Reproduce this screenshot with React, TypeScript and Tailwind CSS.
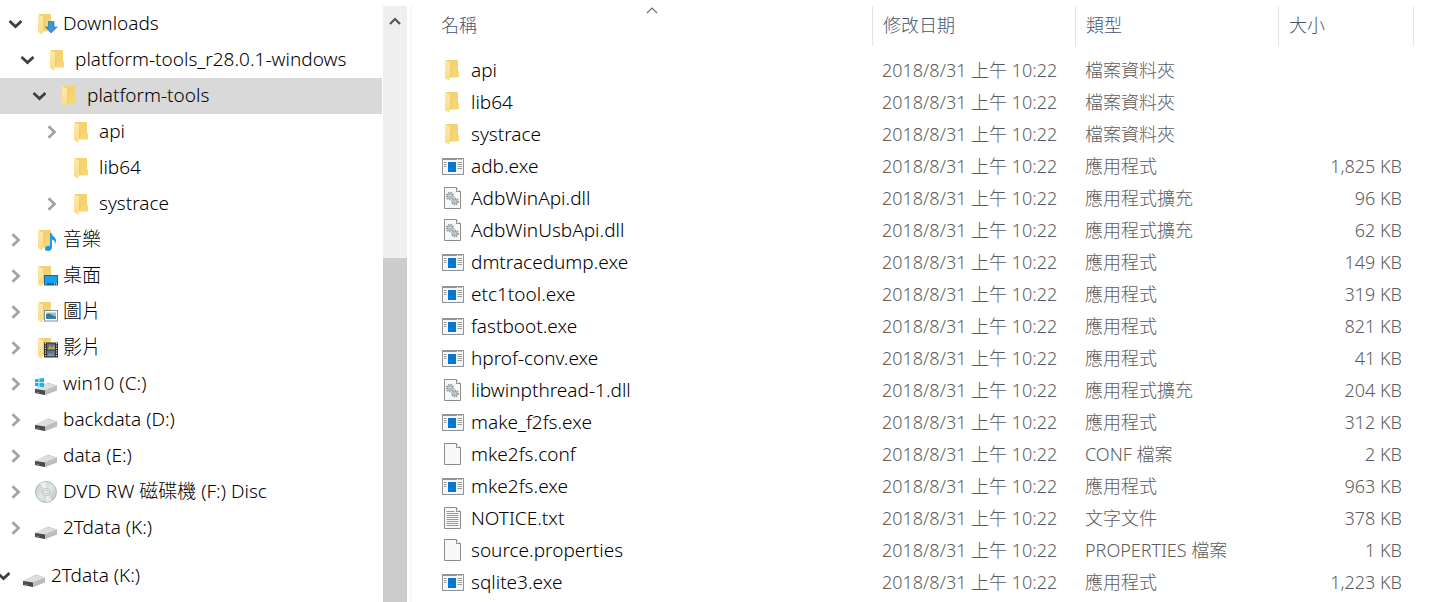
import { useState, type ReactNode } from 'react'
import clsx from 'clsx'

type IconName =
  | 'folder'
  | 'downloads'
  | 'music'
  | 'desktop'
  | 'pictures'
  | 'videos'
  | 'system'
  | 'drive'
  | 'disc'
  | 'exe'
  | 'dll'
  | 'file'
  | 'text'

interface TreeNode {
  id: string
  label: string
  icon: IconName
  level: number
  state?: 'open' | 'closed'
}

interface FileRow {
  name: string
  icon: IconName
  type: string
  size: string
}

const MODIFIED = '2018/8/31 上午 10:22'

const tree: TreeNode[] = [
  { id: 'downloads', label: 'Downloads', icon: 'downloads', level: 1, state: 'open' },
  { id: 'r28', label: 'platform-tools_r28.0.1-windows', icon: 'folder', level: 2, state: 'open' },
  { id: 'tools', label: 'platform-tools', icon: 'folder', level: 3, state: 'open' },
  { id: 'api', label: 'api', icon: 'folder', level: 4, state: 'closed' },
  { id: 'lib64', label: 'lib64', icon: 'folder', level: 4 },
  { id: 'systrace', label: 'systrace', icon: 'folder', level: 4, state: 'closed' },
  { id: 'music', label: '音樂', icon: 'music', level: 1, state: 'closed' },
  { id: 'desktop', label: '桌面', icon: 'desktop', level: 1, state: 'closed' },
  { id: 'pictures', label: '圖片', icon: 'pictures', level: 1, state: 'closed' },
  { id: 'videos', label: '影片', icon: 'videos', level: 1, state: 'closed' },
  { id: 'c', label: 'win10 (C:)', icon: 'system', level: 1, state: 'closed' },
  { id: 'd', label: 'backdata (D:)', icon: 'drive', level: 1, state: 'closed' },
  { id: 'e', label: 'data (E:)', icon: 'drive', level: 1, state: 'closed' },
  { id: 'f', label: 'DVD RW 磁碟機 (F:) Disc', icon: 'disc', level: 1, state: 'closed' },
  { id: 'k', label: '2Tdata (K:)', icon: 'drive', level: 1, state: 'closed' },
  { id: 'k-root', label: '2Tdata (K:)', icon: 'drive', level: 0, state: 'open' },
]

const files: FileRow[] = [
  { name: 'api', icon: 'folder', type: '檔案資料夾', size: '' },
  { name: 'lib64', icon: 'folder', type: '檔案資料夾', size: '' },
  { name: 'systrace', icon: 'folder', type: '檔案資料夾', size: '' },
  { name: 'adb.exe', icon: 'exe', type: '應用程式', size: '1,825 KB' },
  { name: 'AdbWinApi.dll', icon: 'dll', type: '應用程式擴充', size: '96 KB' },
  { name: 'AdbWinUsbApi.dll', icon: 'dll', type: '應用程式擴充', size: '62 KB' },
  { name: 'dmtracedump.exe', icon: 'exe', type: '應用程式', size: '149 KB' },
  { name: 'etc1tool.exe', icon: 'exe', type: '應用程式', size: '319 KB' },
  { name: 'fastboot.exe', icon: 'exe', type: '應用程式', size: '821 KB' },
  { name: 'hprof-conv.exe', icon: 'exe', type: '應用程式', size: '41 KB' },
  { name: 'libwinpthread-1.dll', icon: 'dll', type: '應用程式擴充', size: '204 KB' },
  { name: 'make_f2fs.exe', icon: 'exe', type: '應用程式', size: '312 KB' },
  { name: 'mke2fs.conf', icon: 'file', type: 'CONF 檔案', size: '2 KB' },
  { name: 'mke2fs.exe', icon: 'exe', type: '應用程式', size: '963 KB' },
  { name: 'NOTICE.txt', icon: 'text', type: '文字文件', size: '378 KB' },
  { name: 'source.properties', icon: 'file', type: 'PROPERTIES 檔案', size: '1 KB' },
  { name: 'sqlite3.exe', icon: 'exe', type: '應用程式', size: '1,223 KB' },
]

const indent = ['-ml-1', 'pl-2', 'pl-5', 'pl-8', 'pl-11']

const FolderShape = () => (
  <>
    <path d="M4 1h12v10.5l1 1V18.500H7z" fill="url(#folder-back)" />
    <path d="M3 1l5 2.500q.500.300.500 1V18l-1 .500V21.800L3 19.300z" fill="url(#folder-front)" />
    <path d="M8.500 4.500V18" stroke="#e9c565" strokeWidth=".600" />
  </>
)

const PageShape = () => (
  <>
    <path d="M2.500 .500h12l4 4v17h-16z" fill="#f8f8f8" stroke="#8c8c8c" />
    <path d="M14.500 .500v4h4" fill="#fff" stroke="#8c8c8c" />
  </>
)

const DriveShape = () => (
  <>
    <path d="M0 16l13-6.500 9 3v5L10 22 0 20z" fill="#b9b9b9" />
    <path d="M0 16l12.500-6 9.500 2.500L10 17.500z" fill="#dedede" />
    <path d="M0 16l10 1.500V22L0 20z" fill="#4a4a4a" />
    <path d="M10 17.500l12-5v4.500L10 22z" fill="#bdbdbd" />
    <path d="M1.500 19.200l3 .500" stroke="#8e8e8e" strokeWidth=".800" />
  </>
)

const Gear = ({ cx, cy, r }: { cx: number; cy: number; r: number }) => (
  <>
    <circle cx={cx} cy={cy} r={r} fill="none" stroke="#8797a3" strokeWidth="1.600" strokeDasharray="1.400 .900" />
    <circle cx={cx} cy={cy} r={r - 1} fill="#d5dce0" stroke="#8797a3" strokeWidth=".800" />
    <circle cx={cx} cy={cy} r=".900" fill="#fff" stroke="#74858f" strokeWidth=".500" />
  </>
)

const shapes: Record<IconName, ReactNode> = {
  folder: <FolderShape />,
  downloads: (
    <>
      <FolderShape />
      <path d="M13.500 8.500h5.500v5.500h3.200l-6 6-6-6h3.300z" fill="#3a97dc" stroke="#2176bb" strokeWidth=".700" />
    </>
  ),
  music: (
    <>
      <FolderShape />
      <path d="M15 4h1.500c.500 3.500 4.500 4 4.500 7.500 0 1.500-.500 2.500-1 3.500.200-3-1.500-4-3-4.500v8c0 2-1.800 3.500-4 3.500s-3.500-1-3-3c.400-1.600 2.500-2.700 5-2z" fill="#159bea" />
    </>
  ),
  desktop: (
    <>
      <FolderShape />
      <rect x="9.500" y="10.500" width="13" height="9.500" fill="#18a0f2" stroke="#1b659b" />
      <path d="M10 19h12.500" stroke="#0b4f82" strokeWidth="1.200" />
      <path d="M10.500 19h1M19 19h1M21 19h1" stroke="#fff" strokeWidth="1" />
    </>
  ),
  pictures: (
    <>
      <FolderShape />
      <rect x="9.500" y="9.500" width="13" height="10.500" fill="#fff" stroke="#8c8c8c" />
      <rect x="11" y="11.500" width="10" height="6.500" fill="#8cc3ee" />
      <path d="M11 13.500l3-1 7 3.500v2H11z" fill="#43766f" />
      <path d="M11 16.500l10-1v2.500H11z" fill="#3c7fb5" />
    </>
  ),
  videos: (
    <>
      <FolderShape />
      <rect x="9" y="5.500" width="14" height="15" fill="#2d2d2d" />
      <rect x="12" y="6.500" width="8" height="6" fill="#4a6aa0" />
      <rect x="12" y="13.500" width="8" height="6" fill="#4d76b5" />
      <path d="M13 11l2-3 2 2.500 2-3 1 3.500v1.500h-7z" fill="#b5a63c" />
      <path d="M12.500 18l2-2 2 1.500 2-1.500v3h-6z" fill="#93a04a" />
      <path d="M14 8h1.500M17 15h1.500" stroke="#d9604c" strokeWidth="1.200" />
      <path d="M10.500 6v14M21.500 6v14" stroke="#dcdcdc" strokeWidth="1.200" strokeDasharray="1.200 1.200" />
    </>
  ),
  system: (
    <>
      <DriveShape />
      <path d="M0 6.300l3.600-.600v3.500H0zM4.400 5.600L9 5v4.200H4.400zM0 10h3.600v3.500L0 13zM4.400 10H9v4.200l-4.600-.600z" fill="#19b3ea" />
    </>
  ),
  drive: <DriveShape />,
  disc: (
    <>
      <circle cx="11" cy="11" r="10.500" fill="url(#disc)" stroke="#a2a9a9" strokeWidth=".800" />
      <path d="M11 11L5 2.500A10.500 10.500 0 0 1 11 .800z" fill="#fff" opacity=".600" />
      <path d="M11 11l6 8.500a10.500 10.500 0 0 1-6 1.700z" fill="#fff" opacity=".500" />
      <circle cx="11" cy="11" r="3.800" fill="#dfe5e5" stroke="#b4bcbc" strokeWidth=".700" />
      <circle cx="11" cy="11" r="1.600" fill="#fff" stroke="#a9b2b2" strokeWidth=".600" />
    </>
  ),
  exe: (
    <>
      <rect x=".500" y="3.500" width="21" height="16" fill="#f7f7f7" stroke="#8f9498" />
      <path d="M0 4h22" stroke="#8f9498" strokeWidth="2" />
      <path d="M15 4.500h1M17.500 4.500h1M20 4.500h1" stroke="#fff" strokeWidth="1" />
      <rect x="6" y="7" width="8" height="10" fill="#0078d7" />
      <path d="M2 7.500h2.500M2 9.500h2.500M2 11.500h2.500M15.500 7.500H20M15.500 9.500H20M15.500 11.500H20M15.500 13.500H20" stroke="#9b9b9b" />
    </>
  ),
  dll: (
    <>
      <PageShape />
      <Gear cx={8} cy={9} r={3.4} />
      <Gear cx={13} cy={14.5} r={3.1} />
    </>
  ),
  file: <PageShape />,
  text: (
    <>
      <PageShape />
      <path d="M4.500 4.500h8M4.500 6.500h12M4.500 8.500h12M4.500 10.500h12M4.500 12.500h12M4.500 14.500h12M4.500 16.500h12M4.500 18.500h12" stroke="#9a9a9a" />
    </>
  ),
}

const Icon = ({ name }: { name: IconName }) => (
  <svg viewBox="0 0 22 22" className="size-[22px] shrink-0 overflow-visible" aria-hidden="true">
    {shapes[name]}
  </svg>
)

// Gradients shared by every icon on the page
const IconDefs = () => (
  <svg className="absolute size-0" aria-hidden="true">
    <defs>
      <linearGradient id="folder-back" x1="0" y1="0" x2="1" y2="1">
        <stop offset="0" stopColor="#f0cd70" />
        <stop offset="1" stopColor="#fbd872" />
      </linearGradient>
      <linearGradient id="folder-front" x1="0" y1="0" x2="0" y2="1">
        <stop offset="0" stopColor="#ffe9a8" />
        <stop offset="1" stopColor="#fadc86" />
      </linearGradient>
      <linearGradient id="disc" x1="0" y1="0" x2="1" y2="1">
        <stop offset="0" stopColor="#c3caca" />
        <stop offset=".500" stopColor="#dfe6e6" />
        <stop offset="1" stopColor="#b7bfbf" />
      </linearGradient>
    </defs>
  </svg>
)

const Chevron = ({ open }: { open: boolean }) => (
  <svg viewBox="0 0 14 14" className="size-3.5" fill="none" strokeWidth="2.800" aria-hidden="true">
    {open ? <path d="M1.500 4l6 5.500 6-5.500" stroke="#404040" /> : <path d="M4.500 1.200l6 5.800-6 5.800" stroke="#a3a3a3" />}
  </svg>
)

const App = () => {
  const [selected, setSelected] = useState('tools')

  return (
    <div className="flex min-h-screen overflow-hidden bg-white pt-1.5 font-['Noto_Sans','Noto_Sans_CJK_TC',sans-serif] text-lg leading-6 font-light text-black">
      <IconDefs />

      {/* Folder tree */}
      <nav className="w-[382px] shrink-0 overflow-hidden text-[19px] leading-6">
        <ul>
          {tree.map((node) => (
            <li
              key={node.id}
              className={clsx('flex h-9 items-center', node.level === 0 && 'mt-3', selected === node.id && 'bg-[#d9d9d9]')}
            >
              <div className={clsx('flex items-center', indent[node.level])}>
                {node.state ? (
                  <button type="button" aria-label={node.label} aria-expanded={node.state === 'open'} className="size-3.5">
                    <Chevron open={node.state === 'open'} />
                  </button>
                ) : (
                  <span className="size-3.5" />
                )}
                <a href={`#${node.id}`} onClick={() => setSelected(node.id)} className="ml-[13px] flex items-center gap-1.5 whitespace-nowrap">
                  <Icon name={node.icon} />
                  <span className="pb-0.5">{node.label}</span>
                </a>
              </div>
            </li>
          ))}
        </ul>
      </nav>

      {/* Scrollbar */}
      <div className="ml-px flex w-6 shrink-0 flex-col bg-[#efefef]">
        <button type="button" aria-label="Scroll up" className="flex h-8 items-center justify-center">
          <svg viewBox="0 0 12 12" className="size-3" fill="none" aria-hidden="true">
            <path d="M1 8l5-5 5 5" stroke="#555" strokeWidth="2.200" />
          </svg>
        </button>
        <div className="grow-55" />
        <div className="grow-86 bg-[#cdcdcd]" />
      </div>
      <div className="ml-[3px] w-0.5 shrink-0 bg-[#f5f5f5]" />

      {/* File list */}
      <main className="min-w-0 flex-1 pr-[15px]">
        <table className="w-full table-fixed border-collapse whitespace-nowrap">
          <colgroup>
            <col />
            <col className="w-[203px]" />
            <col className="w-[203px]" />
            <col className="w-[136px]" />
          </colgroup>
          <thead>
            <tr className="h-12 text-left align-top text-[#43566f]">
              <th className="relative p-0 pl-[29px] font-light">
                <div className="flex h-10 items-center pb-0.5">名稱</div>
                <svg viewBox="0 0 12 8" className="absolute top-0 left-1/2 ml-1 h-2 w-3" fill="none" aria-hidden="true">
                  <path d="M1 7l5-5 5 5" stroke="#6d6d6d" strokeWidth="1.200" />
                </svg>
              </th>
              <th className="p-0 font-light">
                <div className="flex h-10 items-center border-l border-[#e3e3e3] pb-0.5 pl-2.5">修改日期</div>
              </th>
              <th className="p-0 font-light">
                <div className="flex h-10 items-center border-l border-[#e3e3e3] pb-0.5 pl-2.5">類型</div>
              </th>
              <th className="p-0 font-light">
                <div className="flex h-10 items-center border-x border-[#e3e3e3] pb-0.5 pl-2.5">大小</div>
              </th>
            </tr>
          </thead>
          <tbody className="text-[#5c5c5c]">
            {files.map((file) => (
              <tr key={file.name} className="h-8">
                <td className="p-0 pl-[30px] text-[19px] leading-6 text-black">
                  <div className="flex items-center gap-[7px]">
                    <Icon name={file.icon} />
                    {file.name}
                  </div>
                </td>
                <td className="p-0 pl-2.5">{MODIFIED}</td>
                <td className="p-0 pl-2.5">{file.type}</td>
                <td className="p-0 pr-3 text-right">{file.size}</td>
              </tr>
            ))}
          </tbody>
        </table>
      </main>
    </div>
  )
}

export default App
